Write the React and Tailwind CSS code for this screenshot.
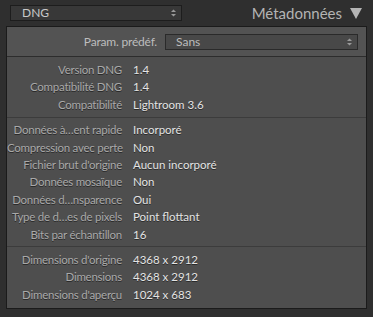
import React from 'react';

const font = { fontFamily: 'Lato, "Open Sans", sans-serif' };

const sections = [
  [
    ['Version DNG', '1.4'],
    ['Compatibilité DNG', '1.4'],
    ['Compatibilité', 'Lightroom 3.6'],
  ],
  [
    ['Données à…ent rapide', 'Incorporé'],
    ['Compression avec perte', 'Non'],
    ["Fichier brut d'origine", 'Aucun incorporé'],
    ['Données mosaïque', 'Non'],
    ['Données d…nsparence', 'Oui'],
    ['Type de d…es de pixels', 'Point flottant'],
    ['Bits par échantillon', '16'],
  ],
  [
    ["Dimensions d'origine", '4368 x 2912'],
    ['Dimensions', '4368 x 2912'],
    ["Dimensions d'aperçu", '1024 x 683'],
  ],
];

function Stepper() {
  return (
    <svg width="7" height="10" viewBox="0 0 7 10" className="shrink-0">
      <path d="M1 4 L3.5 1.5 L6 4 Z" fill="#9a9a9a" />
      <path d="M1 6 L3.5 8.5 L6 6 Z" fill="#9a9a9a" />
    </svg>
  );
}

function Row({ label, value }) {
  return (
    <div className="flex items-center h-[17.4px] text-[11.5px] tracking-[-0.25px]">
      <div className="w-[115px] text-right text-[#a9a9a9] whitespace-nowrap [text-shadow:0_1px_0_#2a2a2a]">
        {label}
      </div>
      <div className="ml-[11px] text-[#e4e4e4] whitespace-nowrap tracking-[0px] [text-shadow:0_1px_0_#2a2a2a]">
        {value}
      </div>
    </div>
  );
}

export default function App() {
  return (
    <div className="w-[373px] h-[317px] bg-[#2f2f2f] overflow-hidden" style={font}>
      {/* Header */}
      <div className="h-[26px] flex items-center pl-[10px] pr-[11px]">
        <div className="w-[172px] h-[16px] border border-[#1d1d1d] bg-[#383838] flex items-center justify-between pl-[11px] pr-[4px]">
          <span className="text-[12px] text-[#c8c8c8] leading-none">DNG</span>
          <Stepper />
        </div>
        <div className="ml-auto flex items-center gap-[8px]">
          <span className="text-[15px] text-[#b4b4b4] leading-none">Métadonnées</span>
          <svg width="12" height="11" viewBox="0 0 12 11">
            <path d="M0 0 H12 L6 11 Z" fill="#b4b4b4" />
          </svg>
        </div>
      </div>

      {/* Panel */}
      <div className="mx-[6px] h-[283px] border border-[#1b1b1b] bg-[#4e4e4e] flex flex-col">
        <div className="h-[30px] flex items-center bg-[#535353] border-b border-[#2d2d2d]">
          <div className="w-[150px] text-right text-[12px] text-[#bdbdbd] tracking-[-0.2px]">Param. prédéf.</div>
          <div className="ml-[8px] w-[193px] h-[16px] border border-[#2a2a2a] bg-[#484848] flex items-center justify-between pl-[10px] pr-[4px]">
            <span className="text-[12px] text-[#bcbcbc] leading-none">Sans</span>
            <Stepper />
          </div>
        </div>

        <div className="pt-[4px] pb-[4px] border-b border-[#3c3c3c]">
          {sections[0].map(([l, v]) => <Row key={l} label={l} value={v} />)}
        </div>
        <div className="pt-[3px] pb-[3px] border-b border-[#3c3c3c]">
          {sections[1].map(([l, v]) => <Row key={l} label={l} value={v} />)}
        </div>
        <div className="pt-[4px]">
          {sections[2].map(([l, v]) => <Row key={l} label={l} value={v} />)}
        </div>
      </div>
    </div>
  );
}
